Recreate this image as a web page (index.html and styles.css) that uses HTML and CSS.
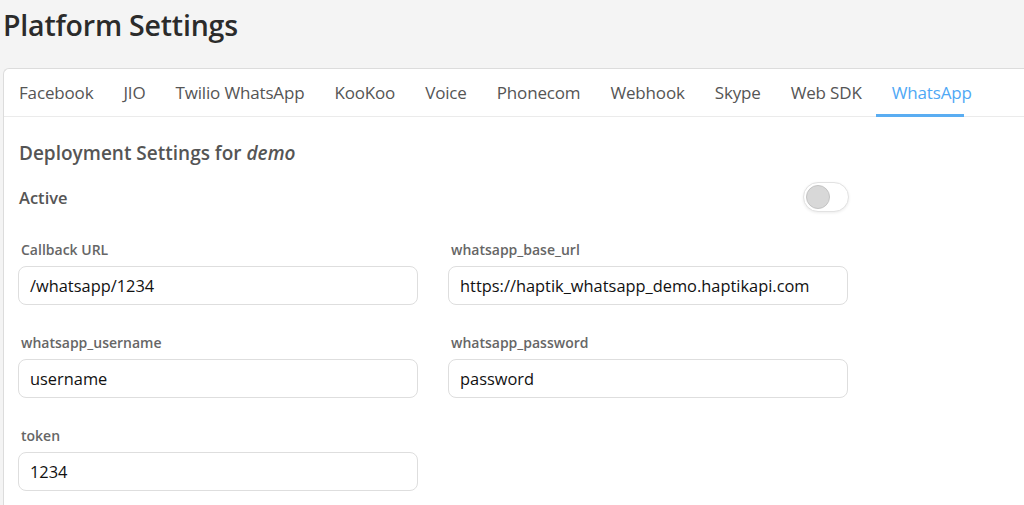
FILE: index.html
```html
<!DOCTYPE html>
<html lang="en">
<head>
<meta charset="utf-8">
<title>Platform Settings</title>
<link rel="stylesheet" href="styles.css">
</head>
<body>
<header class="page-header">
  <h1 class="page-title">Platform Settings</h1>
</header>
<section class="card">
  <nav class="tabs">
    <a class="tab">Facebook</a>
    <a class="tab">JIO</a>
    <a class="tab">Twilio WhatsApp</a>
    <a class="tab">KooKoo</a>
    <a class="tab">Voice</a>
    <a class="tab">Phonecom</a>
    <a class="tab">Webhook</a>
    <a class="tab">Skype</a>
    <a class="tab">Web SDK</a>
    <a class="tab tab-active">WhatsApp</a>
  </nav>
  <div class="card-body">
    <h2 class="section-title">Deployment Settings for <em>demo</em></h2>
    <div class="active-row">
      <span class="active-label">Active</span>
      <span class="toggle"><span class="knob"></span></span>
    </div>
    <div class="form-grid">
      <label class="field">
        <span class="field-label">Callback URL</span>
        <span class="input">/whatsapp/1234</span>
      </label>
      <label class="field">
        <span class="field-label">whatsapp_base_url</span>
        <span class="input">https://haptik_whatsapp_demo.haptikapi.com</span>
      </label>
      <label class="field">
        <span class="field-label">whatsapp_username</span>
        <span class="input">username</span>
      </label>
      <label class="field">
        <span class="field-label">whatsapp_password</span>
        <span class="input">password</span>
      </label>
      <label class="field">
        <span class="field-label">token</span>
        <span class="input">1234</span>
      </label>
    </div>
  </div>
</section>
</body>
</html>
```

FILE: styles.css
```css
* { box-sizing: border-box; }
html, body { margin: 0; padding: 0; }
body {
  background: #f4f4f4;
  font-family: "Open Sans", "Noto Sans", sans-serif;
  color: #333;
  width: 1024px;
  height: 505px;
  overflow: hidden;
}
.page-header { padding: 6px 0 0 3px; height: 68px; }
.page-title {
  margin: 0;
  font-size: 28.5px;
  font-weight: 600;
  color: #2b2b2b;
  line-height: 38px;
  letter-spacing: -0.2px;
}
.card {
  margin-left: 3px;
  width: 1040px;
  height: 450px;
  background: #fff;
  border: 1px solid #dcdcdc;
  border-right: none;
  border-radius: 6px 0 0 0;
}
.tabs {
  display: flex;
  height: 48px;
  border-bottom: 1px solid #ebebeb;
}
.tab {
  position: relative;
  display: flex;
  align-items: center;
  padding: 0 15px;
  font-size: 17px;
  color: #555;
  letter-spacing: -0.16px;
}
.tab-active { color: #4fa8f5; }
.tab-active::after {
  content: "";
  position: absolute;
  left: -1px;
  right: 23px;
  bottom: -1px;
  height: 3px;
  background: #5aadf2;
}
.card-body { padding: 22px 0 0 14px; }
.section-title {
  margin: 0;
  padding-left: 1px;
  font-size: 19px;
  font-weight: 600;
  color: #555;
  line-height: 28px;
}
.section-title em { font-style: italic; }
.active-row {
  display: flex;
  align-items: center;
  justify-content: space-between;
  width: 831px;
  margin-top: 14px;
  height: 32px;
  padding-left: 1px;
}
.active-label { font-size: 16.5px; font-weight: 600; color: #555; }
.toggle {
  width: 46px;
  height: 30px;
  border-radius: 15px;
  border: 1px solid #e2e2e2;
  background: #fff;
  box-shadow: 0 1px 3px rgba(0,0,0,0.08);
  display: flex;
  align-items: center;
  padding-left: 2px;
}
.knob {
  width: 24px;
  height: 24px;
  border-radius: 50%;
  background: #d8d8d8;
  border: 1px solid #c4c4c4;
}
.form-grid {
  display: grid;
  grid-template-columns: 400px 400px;
  column-gap: 30px;
  row-gap: 29px;
  margin-top: 28px;
}
.field { display: flex; flex-direction: column; }
.field-label {
  font-size: 14px;
  font-weight: 600;
  color: #666;
  padding-left: 3px;
  line-height: 18px;
  margin-bottom: 7px;
}
.input {
  height: 39px;
  border: 1px solid #dedede;
  border-radius: 8px;
  padding: 0 11px;
  display: flex;
  align-items: center;
  font-size: 16.4px;
  color: #111;
  background: #fff;
}
```
